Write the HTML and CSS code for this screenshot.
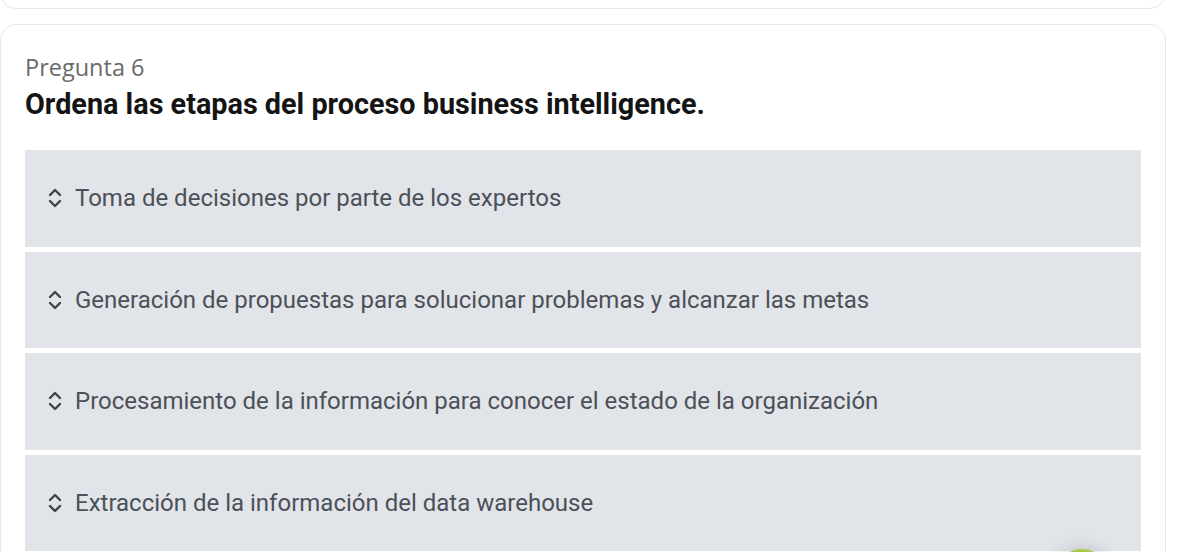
FILE: index.html
```html
<!DOCTYPE html>
<html lang="es">
<head>
<meta charset="utf-8">
<title>Pregunta 6</title>
<link rel="stylesheet" href="styles.css">
</head>
<body>
<div class="page">
  <div class="card card-prev"></div>
  <section class="card card-question">
    <p class="label">Pregunta 6</p>
    <h2 class="title">Ordena las etapas del proceso business intelligence.</h2>
    <ul class="items">
      <li class="item"><svg class="grip" viewBox="0 0 14 24" width="14" height="24"><path d="M2 9 L7 4 L12 9" /><path d="M2 15 L7 20 L12 15" /></svg><span>Toma de decisiones por parte de los expertos</span></li>
      <li class="item"><svg class="grip" viewBox="0 0 14 24" width="14" height="24"><path d="M2 9 L7 4 L12 9" /><path d="M2 15 L7 20 L12 15" /></svg><span>Generación de propuestas para solucionar problemas y alcanzar las metas</span></li>
      <li class="item"><svg class="grip" viewBox="0 0 14 24" width="14" height="24"><path d="M2 9 L7 4 L12 9" /><path d="M2 15 L7 20 L12 15" /></svg><span>Procesamiento de la información para conocer el estado de la organización</span></li>
      <li class="item"><svg class="grip" viewBox="0 0 14 24" width="14" height="24"><path d="M2 9 L7 4 L12 9" /><path d="M2 15 L7 20 L12 15" /></svg><span>Extracción de la información del data warehouse</span></li>
    </ul>
  </section>
  <div class="fab"></div>
</div>
</body>
</html>
```
FILE: styles.css
```css
html, body {
  margin: 0;
  padding: 0;
  background: #ffffff;
  overflow: hidden;
}
.page {
  position: relative;
  width: 1182px;
  height: 552px;
  overflow: hidden;
  font-family: Roboto, "Liberation Sans", sans-serif;
}
.card {
  box-sizing: border-box;
  width: 1166px;
  border: 1.5px solid #e8e9eb;
  border-radius: 16px;
  background: #fff;
}
.card-prev {
  height: 40px;
  margin-top: -31px;
}
.card-question {
  margin-top: 15px;
  padding: 26px 24px 0 24px;
  height: 600px;
}
.label {
  margin: 0;
  font-family: "Open Sans", sans-serif;
  font-size: 23.5px;
  line-height: 32px;
  color: #6a6a6a;
}
.title {
  margin: 3px 0 0 0;
  font-family: Roboto, sans-serif;
  font-weight: 700;
  font-size: 28.8px;
  line-height: 36px;
  color: #141414;
}
.items {
  list-style: none;
  margin: 28px 0 0 0;
  padding: 0;
  width: 1116px;
  display: flex;
  flex-direction: column;
  gap: 5px;
}
.item {
  height: 96.5px;
  background: #e1e4e9;
  display: flex;
  align-items: center;
  padding-left: 23px;
  font-size: 24px;
  color: #4c5057;
}
.grip {
  flex: none;
  margin-right: 13px;
  fill: none;
  stroke: #3f434a;
  stroke-width: 2.4;
  stroke-linecap: round;
  stroke-linejoin: round;
}
.fab {
  position: absolute;
  left: 1054px;
  top: 549px;
  width: 56px;
  height: 56px;
  border-radius: 50%;
  background: #a8c94a;
  box-shadow: 0 0 18px rgba(0,0,0,0.18);
}
```
